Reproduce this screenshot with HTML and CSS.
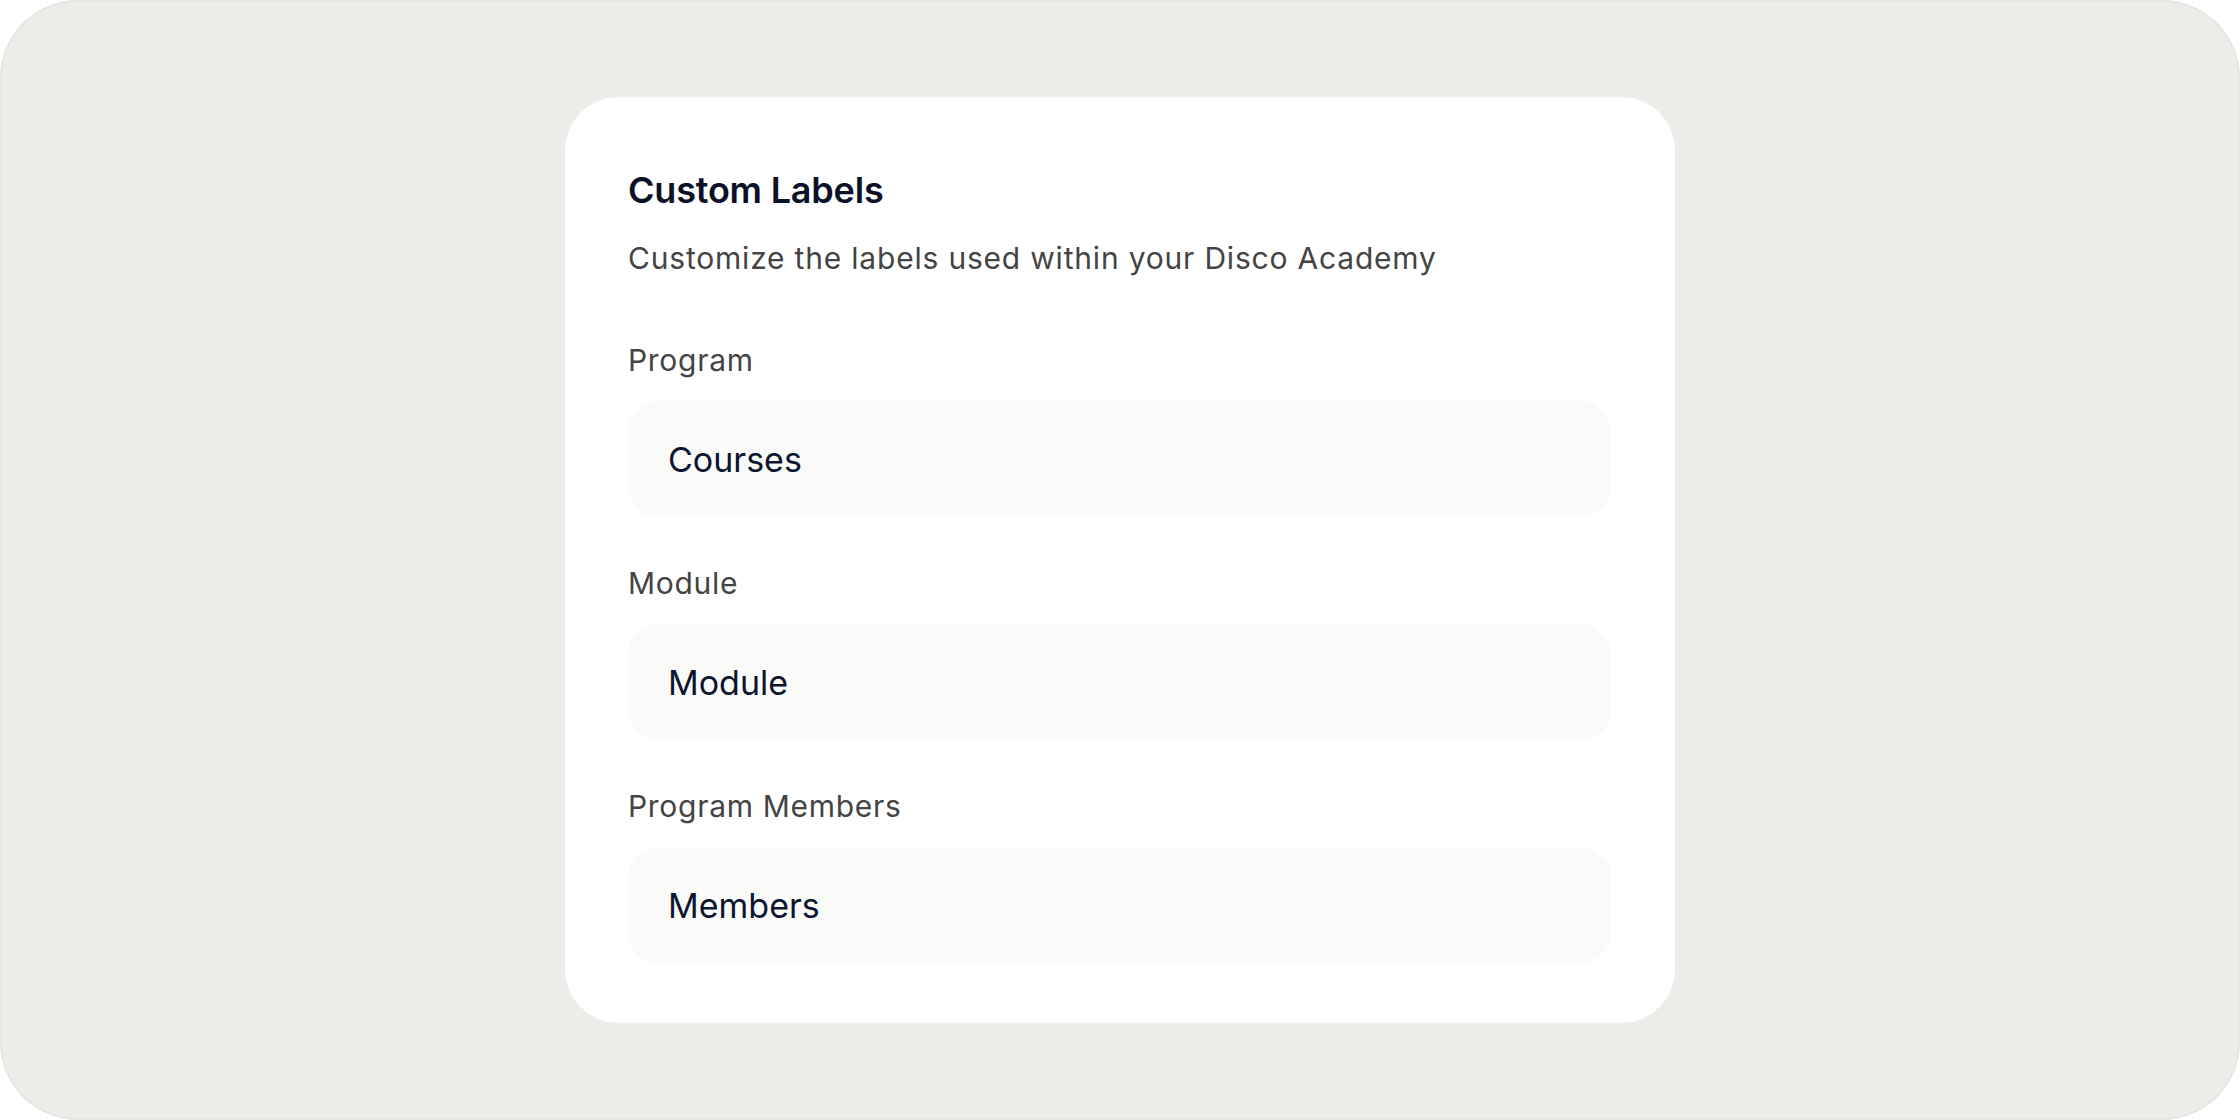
FILE: index.html
```html
<!DOCTYPE html>
<html lang="en">
<head>
  <meta charset="UTF-8">
  <meta name="viewport" content="width=device-width, initial-scale=1.0">
  <link rel="stylesheet" href="styles.css">
  <title>Custom Labels</title>
</head>
<body>
  <div class="frame">
    <div class="card">
      <h1 class="title">Custom Labels</h1>
      <p class="subtitle">Customize the labels used within your Disco Academy</p>

      <div class="group">
        <label class="label">Program</label>
        <div class="field">Courses</div>
      </div>

      <div class="group">
        <label class="label">Module</label>
        <div class="field">Module</div>
      </div>

      <div class="group">
        <label class="label">Program Members</label>
        <div class="field">Members</div>
      </div>
    </div>
  </div>
</body>
</html>
```

FILE: styles.css
```css
body {
  margin: 0;
  background-color: #ffffff;
  font-family: 'Inter', 'Noto Sans', sans-serif;
}

.frame {
  box-sizing: border-box;
  height: 1120px;
  display: flex;
  align-items: center;
  justify-content: center;
  background-color: #ecece8;
  border: 2px solid #e5e5e1;
  border-radius: 78px;
}

.card {
  box-sizing: border-box;
  width: 1110px;
  height: 926px;
  padding: 71px 64px 61px 63px;
  display: flex;
  flex-direction: column;
  background-color: #ffffff;
  border-radius: 54px;
}

.title {
  margin: 0;
  font-size: 36px;
  line-height: 44px;
  font-weight: 600;
  letter-spacing: -0.2px;
  color: #0b1228;
}

.subtitle {
  margin: 26px 0 0;
  font-size: 30px;
  line-height: 40px;
  letter-spacing: 0.8px;
  color: #444444;
}

.group {
  display: flex;
  flex-direction: column;
  gap: 21px;
  margin-top: 46px;
}

.subtitle + .group {
  margin-top: 62px;
}

.label {
  font-size: 30px;
  line-height: 40px;
  letter-spacing: 0.7px;
  color: #444444;
}

.field {
  height: 116px;
  display: flex;
  align-items: center;
  padding: 0 40px;
  font-size: 34px;
  color: #0c1530;
  background-color: #fafaf8;
  border-radius: 30px;
}
```
